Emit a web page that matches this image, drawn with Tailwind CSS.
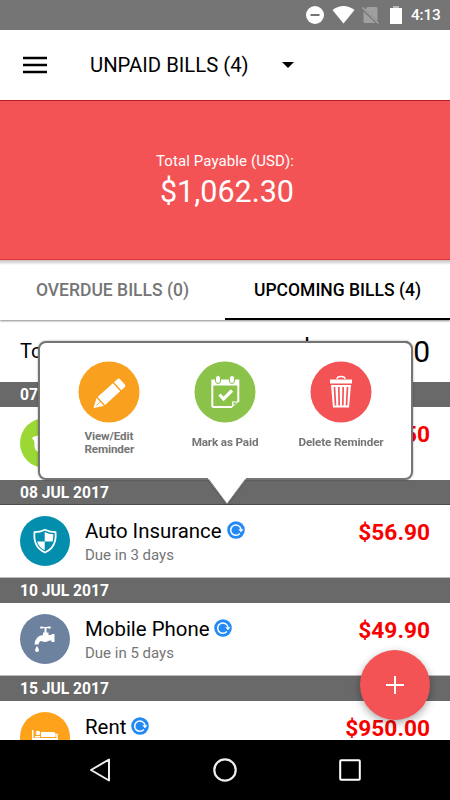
<!DOCTYPE html>
<html lang="en">
<head>
<meta charset="utf-8">
<title>Unpaid Bills</title>
<script src="https://cdn.jsdelivr.net/npm/@tailwindcss/browser@4"></script>
</head>
<body class="bg-white">
<svg class="hidden">
  <symbol id="repeat" viewBox="0 0 18 18">
    <circle cx="9" cy="9" r="8.8" fill="#2389f5"/>
    <path d="M12.8 12.6A5.2 5.2 0 1 1 14 8.2" fill="none" stroke="#fff" stroke-width="1.5"/>
    <path d="M11.3 8.2h5.2L14 11.2z" fill="#fff"/>
  </symbol>
</svg>
<div class="relative flex h-[800px] w-[450px] flex-col overflow-hidden bg-white font-['Roboto',sans-serif] text-black">
  <header class="flex h-[30px] shrink-0 items-center bg-[#757575] pl-[306px] text-white">
    <svg width="18" height="18" viewBox="0 0 18 18"><circle cx="9" cy="9" r="9" fill="#fff"/><path d="M4.5 9h9" stroke="#757575" stroke-width="2"/></svg>
    <svg class="ml-[8px]" width="23" height="18" viewBox="0 0 23 18"><path d="M0.5 4Q11.500-4 22.500 4L11.500 17.500z" fill="#fff"/></svg>
    <svg class="ml-[7px]" width="18" height="18" viewBox="0 0 18 18"><path d="M5.500 1H14q1.500 0 1.500 1.500V17H2.500Q1.500 17 1.500 16V5z" fill="#a0a0a0"/><path d="M0 2L16 17.500" stroke="#757575" stroke-width="3"/><path d="M0.500 1.500L16.500 17.500" stroke="#a6a6a6" stroke-width="1.300"/></svg>
    <svg class="ml-[9px]" width="14" height="18" viewBox="0 0 14 18"><path d="M4 0h6v2H4z" fill="#bbb"/><path d="M1 2h12v16H1z" fill="#fff"/></svg>
    <span class="ml-[8px] text-[15.300px] font-medium leading-[30px] tracking-[-0.100px]">4:13</span>
  </header>
  <div class="flex h-[70px] shrink-0 items-center pl-[23px]">
    <svg class="shrink-0" width="24" height="18" viewBox="0 0 24 18"><path d="M0 2h24M0 9h24M0 16h24" stroke="#000" stroke-width="2.300"/></svg>
    <h1 class="ml-[43px] w-[192px] whitespace-nowrap pt-px text-[20.300px]">UNPAID BILLS (4)</h1>
    <svg width="12" height="6" viewBox="0 0 12 6"><path d="M0 0h12L6 6z"/></svg>
  </div>
  <section class="flex h-[160px] shrink-0 flex-col border-y border-t-[#b51a1d] border-b-[#ee3538] bg-[#f45356] pr-[156px] pt-[50px] text-right text-white">
    <p class="text-[15px] leading-[20px] tracking-[0.1px]">Total Payable (USD):</p>
    <p class="mt-[3px] text-[30.500px] leading-[36px]">$1,062.30</p>
  </section>
  <nav class="relative z-10 flex h-[60px] shrink-0 bg-white text-center text-[17.500px] font-medium leading-[61px] shadow-[0_1px_2px_#0007]">
    <div class="absolute inset-x-0 top-0 h-[5px] bg-linear-to-b from-black/25 to-transparent"></div>
    <div class="w-1/2 text-[#757575]">OVERDUE BILLS (0)</div>
    <div class="w-1/2 border-b-2 border-black">UPCOMING BILLS (4)</div>
  </nav>
  <main class="flex min-h-0 flex-1 flex-col overflow-hidden">
    <div class="flex h-[62px] shrink-0 items-center justify-between pl-5 pr-[20px]"><span class="text-[20px]">Total</span><span class="text-[30px]">$1,062.30</span></div>
    <h2 class="h-[25px] shrink-0 bg-[#696969] pl-5 text-[15.600px] font-bold leading-[26px] text-white">07 JUL 2017</h2>
    <div class="flex h-[73px] shrink-0 pl-5 pr-5">
      <svg class="mt-[11px]" width="50" height="50" viewBox="0 0 50 50"><circle cx="25" cy="25" r="25" fill="#9bd735"/><path d="M12 20.500q1-2.500 3-2l3-1 2 3h8v13H17c-2-2-3-5-2.500-8l-.5-3z" fill="#fff"/></svg>
      <span class="ml-auto mt-[12px] text-[22.700px] font-bold leading-[32px] text-[#f90000]">$35.50</span>
    </div>
    <h2 class="h-[25px] shrink-0 border-b border-[#4b4b4b] bg-[#696969] pl-5 text-[15.600px] font-bold leading-[26px] text-white">08 JUL 2017</h2>
    <div class="flex h-[73px] shrink-0 border-b border-[#bbb] pl-5 pr-5">
      <svg class="mt-[11px] shrink-0" width="50" height="50" viewBox="0 0 50 50"><circle cx="25" cy="25" r="25" fill="#048eae"/><path d="M25 13.700q5 2.500 10.500 2.500C36.500 26 33 33 25 36.500 17 33 13.500 26 14.500 16.200Q20 16.200 25 13.700z" fill="none" stroke="#fff" stroke-width="1.800"/><path d="M24.700 25.500V34.300Q19 31.500 17 25.500zM24.700 16Q29 18.200 33.300 18.200 33.500 21 32.700 25.500H24.700z" fill="#fff"/></svg>
      <div class="ml-[15px] pt-[13px]">
        <div class="flex items-center gap-[5px]"><span class="text-[20.400px] leading-[26px]">Auto Insurance</span><svg class="relative -top-px" width="18" height="18"><use href="#repeat"/></svg></div>
        <p class="text-[15px] leading-[22px] text-[#757575]">Due in 3 days</p>
      </div>
      <span class="ml-auto mt-[12px] text-[22.700px] font-bold leading-[32px] text-[#f90000]">$56.90</span>
    </div>
    <h2 class="h-[25px] shrink-0 bg-[#696969] pl-5 text-[15.600px] font-bold leading-[26px] text-white">10 JUL 2017</h2>
    <div class="flex h-[73px] shrink-0 border-b border-[#bbb] pl-5 pr-5">
      <svg class="mt-[11px] shrink-0" width="50" height="50" viewBox="0 0 50 50"><circle cx="25" cy="25" r="25" fill="#6d829e"/><g fill="#fff"><path d="M20 13.500q0-1.500 2-1l2 .5h2l3-.5q2-.3 2 1t-2 1l-2.500-.5V18.500h2V21h3v-1h3v8h-3v-1.500h-2q-4 2.500-8 .5-2.500 0-3 3.500h-4Q15.500 21.500 23 21v-2.500h1.500V14L22 14.500q-2 .5-2-1z"/><path d="M17 32q4 5.500 0 6-4-.5 0-6z"/></g></svg>
      <div class="ml-[15px] pt-[13px]">
        <div class="flex items-center gap-[5px]"><span class="text-[20.400px] leading-[26px]">Mobile Phone</span><svg class="relative -top-px" width="18" height="18"><use href="#repeat"/></svg></div>
        <p class="text-[15px] leading-[22px] text-[#757575]">Due in 5 days</p>
      </div>
      <span class="ml-auto mt-[12px] text-[22.700px] font-bold leading-[32px] text-[#f90000]">$49.90</span>
    </div>
    <h2 class="h-[25px] shrink-0 bg-[#696969] pl-5 text-[15.600px] font-bold leading-[26px] text-white">15 JUL 2017</h2>
    <div class="flex h-[73px] shrink-0 pl-5 pr-5">
      <svg class="mt-[11px] shrink-0" width="50" height="50" viewBox="0 0 50 50"><circle cx="25" cy="25" r="25" fill="#fea21c"/><g fill="#fff"><path d="M12 18h1.500v8H38v8h-2v-3H14v3h-2z"/><circle cx="18" cy="21" r="2.200"/><path d="M15 24h5v1.500h-5z"/><path d="M21 20h12.500q2 0 2 2v3H21z"/></g><path d="M35.500 22.500H37v4" fill="none" stroke="#fff" stroke-width="1.400"/></svg>
      <div class="ml-[15px] pt-[13px]"><div class="flex items-center gap-[5px]"><span class="text-[20.400px] leading-[26px]">Rent</span><svg class="relative -top-px" width="18" height="18"><use href="#repeat"/></svg></div></div>
      <span class="ml-auto mt-[12px] text-[22.700px] font-bold leading-[32px] text-[#f90000]">$950.00</span>
    </div>
  </main>
  <footer class="z-20 flex h-[60px] shrink-0 items-center bg-black pl-[89px]">
    <svg width="22" height="24" viewBox="0 0 22 24"><path d="M2 12L20 1.500v21z" fill="none" stroke="#eee" stroke-width="2" stroke-linejoin="round"/></svg>
    <svg class="ml-[102px]" width="24" height="24" viewBox="0 0 24 24"><circle cx="12" cy="12" r="10.700" fill="none" stroke="#eee" stroke-width="2.200"/></svg>
    <svg class="ml-[102px]" width="22" height="22" viewBox="0 0 22 22"><rect x="1.200" y="1.200" width="19.600" height="19.600" rx="1" fill="none" stroke="#fff" stroke-width="2"/></svg>
  </footer>

  <div class="absolute left-[38px] top-[341px] z-20 h-[139px] w-[375px] rounded-[8px] border-2 border-[#757575] bg-white drop-shadow-[0_0_1px_#0005]">
    <svg class="absolute left-[168px] top-[134px]" width="40" height="30" viewBox="0 0 40 30"><path d="M0 0v2L19 27 38 2V0z" fill="#fff"/><path d="M0.500 2L19 27 37.500 2" fill="none" stroke="#858585" stroke-width="1"/></svg>
    <div class="flex pt-[18px] text-[11.700px] font-bold leading-[13px] tracking-[-0.150px] text-[#757575]">
      <div class="flex w-[138px] flex-col items-center">
        <svg width="62" height="62" viewBox="0 0 62 62"><circle cx="31" cy="31" r="30.500" fill="#f9a01e"/><g transform="translate(15.500 47) rotate(-42)" fill="#fff"><path d="M0 0L9-5.500V5.500zM10.500-5.500H31V5.500H10.500zM32.500-5.500H37q2 0 2 2v7q0 2-2 2h-4.500z"/><path d="M3.500 0H9" stroke="#f9a01e" stroke-width=".7"/></g></svg>
        <p class="mt-[7px] w-[49px] whitespace-nowrap text-left">View/Edit<br>Reminder</p>
      </div>
      <div class="flex w-[94px] flex-col items-center">
        <svg width="62" height="62" viewBox="0 0 62 62"><circle cx="31" cy="31" r="30.500" fill="#8bc34a"/><g fill="none" stroke="#fff"><path d="M18.300 24V44.500q0 1.500 1.500 1.500H38M44.300 24V41" stroke-width="2"/><path d="M38 46.500v-6h7z" fill="#fff" stroke="none"/><path d="M39.500 41.500h3.500l-3.500 3z" fill="#8bc34a" stroke="none"/><path d="M25.500 33.500l4 4.500 8.500-8.500" stroke-width="3.200"/></g><path d="M17.300 18.500h28v6h-28z" fill="#fff"/><g fill="#fff" stroke="#8bc34a" stroke-width="1"><rect x="21.500" y="14.500" width="5" height="8" rx="2.500"/><rect x="35.500" y="14.500" width="5" height="8" rx="2.500"/></g></svg>
        <p class="mt-[13px] whitespace-nowrap">Mark as Paid</p>
      </div>
      <div class="flex w-[138px] flex-col items-center">
        <svg width="62" height="62" viewBox="0 0 62 62"><circle cx="31" cy="31" r="30.500" fill="#f45356"/><path d="M27 18q0-2.500 4-2.500t4 2.500" fill="none" stroke="#fff" stroke-width="1.400"/><path d="M20 18.500h22v4H20z" fill="#fff"/><path d="M21 24h20l-2 22.500H23z" fill="#fff"/><path d="M24.500 26l1 18.500M28.800 26l.4 18.500M33.200 26l-.4 18.500M37.500 26l-1 18.500" stroke="#f45356" stroke-width="1.700"/></svg>
        <p class="mt-[13px] whitespace-nowrap">Delete Reminder</p>
      </div>
    </div>
  </div>
  <button class="absolute left-[360px] top-[650px] z-10 flex size-[70px] items-center justify-center rounded-full bg-[#f45356] shadow-[0_3px_8px_#0005]"><svg width="18" height="18" viewBox="0 0 18 18"><path d="M9 0v18M0 9h18" stroke="#fff" stroke-width="2"/></svg></button>
</div>
</body>
</html>
